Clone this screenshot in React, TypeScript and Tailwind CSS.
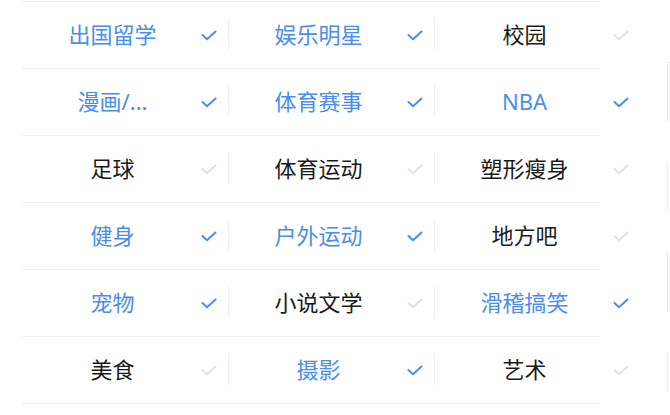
type Tag = { name: string; on: boolean };

const rows: Tag[][] = [
  [
    { name: "出国留学", on: true },
    { name: "娱乐明星", on: true },
    { name: "校园", on: false },
  ],
  [
    { name: "漫画/...", on: true },
    { name: "体育赛事", on: true },
    { name: "NBA", on: true },
  ],
  [
    { name: "足球", on: false },
    { name: "体育运动", on: false },
    { name: "塑形瘦身", on: false },
  ],
  [
    { name: "健身", on: true },
    { name: "户外运动", on: true },
    { name: "地方吧", on: false },
  ],
  [
    { name: "宠物", on: true },
    { name: "小说文学", on: false },
    { name: "滑稽搞笑", on: true },
  ],
  [
    { name: "美食", on: false },
    { name: "摄影", on: true },
    { name: "艺术", on: false },
  ],
];

function Tick({ on }: { on: boolean }) {
  return (
    <svg width="16" height="11" viewBox="0 0 16 11" fill="none">
      <path
        d="M1.5 5 L6 9.2 L14.5 1.5"
        stroke={on ? "#4a8df0" : "#e2e2e2"}
        strokeWidth="2"
        strokeLinecap="round"
        strokeLinejoin="round"
      />
    </svg>
  );
}

function Cell({ tag, first }: { tag: Tag; first: boolean }) {
  return (
    <div className="relative flex w-[206px] items-center">
      {/* divider between columns */}
      {!first && <div className="absolute left-0 top-[16px] h-[32px] w-px bg-[#f0f0f0]" />}
      <div
        className={
          "w-[181px] pb-[2px] text-center text-[22px] leading-none " +
          (tag.on ? "text-[#4a8df0]" : "text-[#1a1a1a]")
        }
      >
        {tag.name}
      </div>
      <div className="flex w-[25px] items-center pr-[2px]">
        <div className="-ml-[2px]">
          <Tick on={tag.on} />
        </div>
      </div>
    </div>
  );
}

export default function App() {
  return (
    <div
      className="relative h-[415px] w-[670px] overflow-hidden bg-white"
      style={{ fontFamily: '"Noto Sans", "Noto Sans CJK SC", sans-serif' }}
    >
      <div className="flex flex-col pl-[22px] pt-[1px]">
        <div className="h-px w-[578px] bg-[#f1f1f1]" />
        {rows.map((r, i) => (
          <div key={i} className="flex flex-col">
            <div className="flex h-[66px]">
              {r.map((t, j) => (
                <Cell key={t.name} tag={t} first={j === 0} />
              ))}
            </div>
            <div className="h-px w-[578px] bg-[#f1f1f1]" />
          </div>
        ))}
      </div>

      {/* cut-off panel edges on the right */}
      <div className="absolute left-[667px] top-[62px] flex flex-col gap-[40px]">
        <div className="h-[60px] w-[3px] border-l border-t border-[#ececec]" />
        <div className="h-[50px] w-[3px] border-l border-[#f0f0f0]" />
        <div className="h-[60px] w-[3px] border-l border-[#ececec]" />
        <div className="h-[40px] w-[3px] border-l border-[#f0f0f0]" />
      </div>
    </div>
  );
}
